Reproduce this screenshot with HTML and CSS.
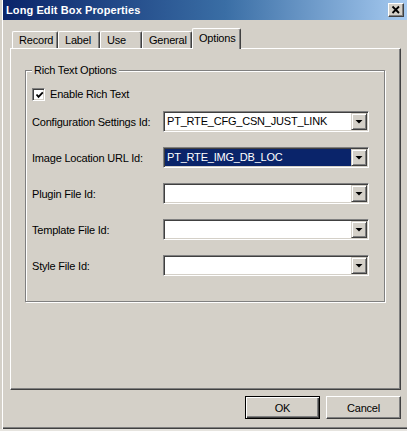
FILE: index.html
```html
<!DOCTYPE html>
<html>
<head>
<meta charset="utf-8">
<link rel="stylesheet" href="styles.css">
</head>
<body>
<div class="window">
  <div class="titlebar">
    <span class="title">Long Edit Box Properties</span>
    <div class="close">
      <svg width="14" height="12" viewBox="0 0 14 12"><path d="M3.5 2.5 L10 9 M10 2.5 L3.5 9" stroke="#000" stroke-width="1.8" fill="none"/></svg>
    </div>
  </div>
  <div class="tabs">
    <div class="tab w-record">Record</div>
    <div class="tab w-label">Label</div>
    <div class="tab w-use">Use</div>
    <div class="tab w-general">General</div>
    <div class="tab w-options active">Options</div>
  </div>
  <div class="panel">
    <div class="group">
      <span class="legend">Rich Text Options</span>
      <div class="check">
        <span class="box"><svg width="9" height="9" viewBox="0 0 9 9"><path d="M1.5 3.5 L3.5 5.8 L7.8 1.3" stroke="#000" stroke-width="1.8" fill="none"/></svg></span>
        <span>Enable Rich Text</span>
      </div>
      <div class="rows">
        <div class="row">
          <span class="lbl">Configuration Settings Id:</span>
          <div class="combo"><div class="field">PT_RTE_CFG_CSN_JUST_LINK</div><div class="drop"><svg width="14" height="15" viewBox="0 0 14 15"><path d="M3.5 6 H10.5 L7 9.5 Z" fill="#000"/></svg></div></div>
        </div>
        <div class="row">
          <span class="lbl">Image Location URL Id:</span>
          <div class="combo"><div class="field selected">PT_RTE_IMG_DB_LOC</div><div class="drop"><svg width="14" height="15" viewBox="0 0 14 15"><path d="M3.5 6 H10.5 L7 9.5 Z" fill="#000"/></svg></div></div>
        </div>
        <div class="row">
          <span class="lbl">Plugin File Id:</span>
          <div class="combo"><div class="field"></div><div class="drop"><svg width="14" height="15" viewBox="0 0 14 15"><path d="M3.5 6 H10.5 L7 9.5 Z" fill="#000"/></svg></div></div>
        </div>
        <div class="row">
          <span class="lbl">Template File Id:</span>
          <div class="combo"><div class="field"></div><div class="drop"><svg width="14" height="15" viewBox="0 0 14 15"><path d="M3.5 6 H10.5 L7 9.5 Z" fill="#000"/></svg></div></div>
        </div>
        <div class="row">
          <span class="lbl">Style File Id:</span>
          <div class="combo"><div class="field"></div><div class="drop"><svg width="14" height="15" viewBox="0 0 14 15"><path d="M3.5 6 H10.5 L7 9.5 Z" fill="#000"/></svg></div></div>
        </div>
      </div>
    </div>
  </div>
  <div class="buttons">
    <div class="btn default"><span>OK</span></div>
    <div class="btn"><span>Cancel</span></div>
  </div>
</div>
</body>
</html>
```
FILE: styles.css
```css
html, body {
  margin: 0;
  padding: 0;
  background: #e6e4df;
}
.window {
  width: 407px;
  height: 429px;
  box-sizing: border-box;
  padding-left: 3px;
  background: #d4d0c8;
  font-family: "Liberation Sans", Arial, sans-serif;
  font-size: 11px;
  letter-spacing: -0.2px;
  color: #000;
  display: flex;
  flex-direction: column;
  box-shadow: inset 2px 0 0 #d4d0c8, inset 3px 0 0 #fff, inset 0 -1px 0 #404040, inset 0 -2px 0 #808080;
}
.titlebar {
  height: 20px;
  display: flex;
  align-items: center;
  padding-left: 3px;
  background: linear-gradient(to right, #0a246a, #3a6ea5 55%, #a6caf0);
  color: #fff;
  font-weight: bold;
  font-size: 11px;
}
.title {
  flex: 1;
  letter-spacing: 0.1px;
}
.close {
  width: 16px;
  height: 14px;
  box-sizing: border-box;
  margin-right: 3px;
  background: #d4d0c8;
  border: 1px solid;
  border-color: #fff #404040 #404040 #fff;
  box-shadow: inset -1px -1px 0 #808080;
  display: flex;
}
.tabs {
  display: flex;
  align-items: flex-end;
  height: 20px;
  margin-top: 8px;
  margin-left: 9px;
  position: relative;
  z-index: 2;
}
.tab {
  height: 17px;
  box-sizing: border-box;
  padding-left: 6px;
  padding-top: 2px;
  border-top: 1px solid #fff;
  border-left: 1px solid #fff;
  border-right: 1px solid #404040;
  box-shadow: inset -1px 0 0 #808080;
  border-radius: 2px 2px 0 0;
  line-height: 13px;
  white-space: nowrap;
}
.w-record { width: 46px; }
.w-label { width: 42px; }
.w-use { width: 42px; }
.w-general { width: 50px; }
.w-options { width: 49px; }
.tab.active {
  height: 21px;
  margin-bottom: -1px;
  padding-top: 3px;
  background: #d4d0c8;
}
.panel {
  height: 342px;
  box-sizing: border-box;
  margin-left: 7px;
  margin-right: 6px;
  border-top: 1px solid #fff;
  border-left: 1px solid #fff;
  border-right: 1px solid #404040;
  border-bottom: 1px solid #404040;
  box-shadow: inset -1px -1px 0 #808080;
  padding-top: 21px;
  padding-left: 14px;
  padding-right: 15px;
}
.group {
  height: 232px;
  box-sizing: border-box;
  border: 1px solid #808080;
  box-shadow: 1px 1px 0 #fff, inset 1px 1px 0 #fff;
  padding-left: 6px;
  display: flex;
  flex-direction: column;
  align-items: flex-start;
}
.legend {
  margin-top: -7px;
  padding: 0 2px;
  height: 13px;
  line-height: 13px;
  background: #d4d0c8;
}
.check {
  margin-top: 11px;
  display: flex;
  align-items: center;
  gap: 5px;
  height: 13px;
  line-height: 13px;
}
.box {
  width: 13px;
  height: 13px;
  box-sizing: border-box;
  background: #fff;
  border: 1px solid;
  border-color: #808080 #fff #fff #808080;
  box-shadow: inset 1px 1px 0 #404040, inset -1px -1px 0 #d4d0c8;
  display: flex;
  align-items: center;
  justify-content: center;
  padding: 1px 0 0 1px;
}
.rows {
  margin-top: 10px;
  display: flex;
  flex-direction: column;
  gap: 15px;
}
.row {
  display: flex;
  align-items: center;
  height: 21px;
}
.lbl {
  width: 131px;
  white-space: nowrap;
}
.combo {
  width: 206px;
  height: 21px;
  box-sizing: border-box;
  border: 1px solid;
  border-color: #808080 #fff #fff #808080;
  box-shadow: inset 1px 1px 0 #404040, inset -1px -1px 0 #d4d0c8;
  padding: 1px;
  display: flex;
}
.field {
  flex: 1;
  background: #fff;
  line-height: 17px;
  padding-left: 2px;
  white-space: nowrap;
  overflow: hidden;
}
.field.selected {
  background: #0a246a;
  color: #fff;
}
.drop {
  width: 16px;
  height: 17px;
  box-sizing: border-box;
  background: #d4d0c8;
  border: 1px solid;
  border-color: #d4d0c8 #404040 #404040 #d4d0c8;
  box-shadow: inset 1px 1px 0 #fff, inset -1px -1px 0 #808080;
  display: flex;
}
.buttons {
  display: flex;
  justify-content: flex-end;
  gap: 6px;
  margin-top: 6px;
  margin-right: 6px;
}
.btn {
  width: 75px;
  height: 23px;
  box-sizing: border-box;
  border: 1px solid;
  border-color: #fff #404040 #404040 #fff;
  box-shadow: inset -1px -1px 0 #808080;
  display: flex;
  align-items: center;
  justify-content: center;
}
.btn.default {
  border-color: #000;
  box-shadow: inset 1px 1px 0 #fff, inset -1px -1px 0 #404040, inset -2px -2px 0 #808080;
}
```
